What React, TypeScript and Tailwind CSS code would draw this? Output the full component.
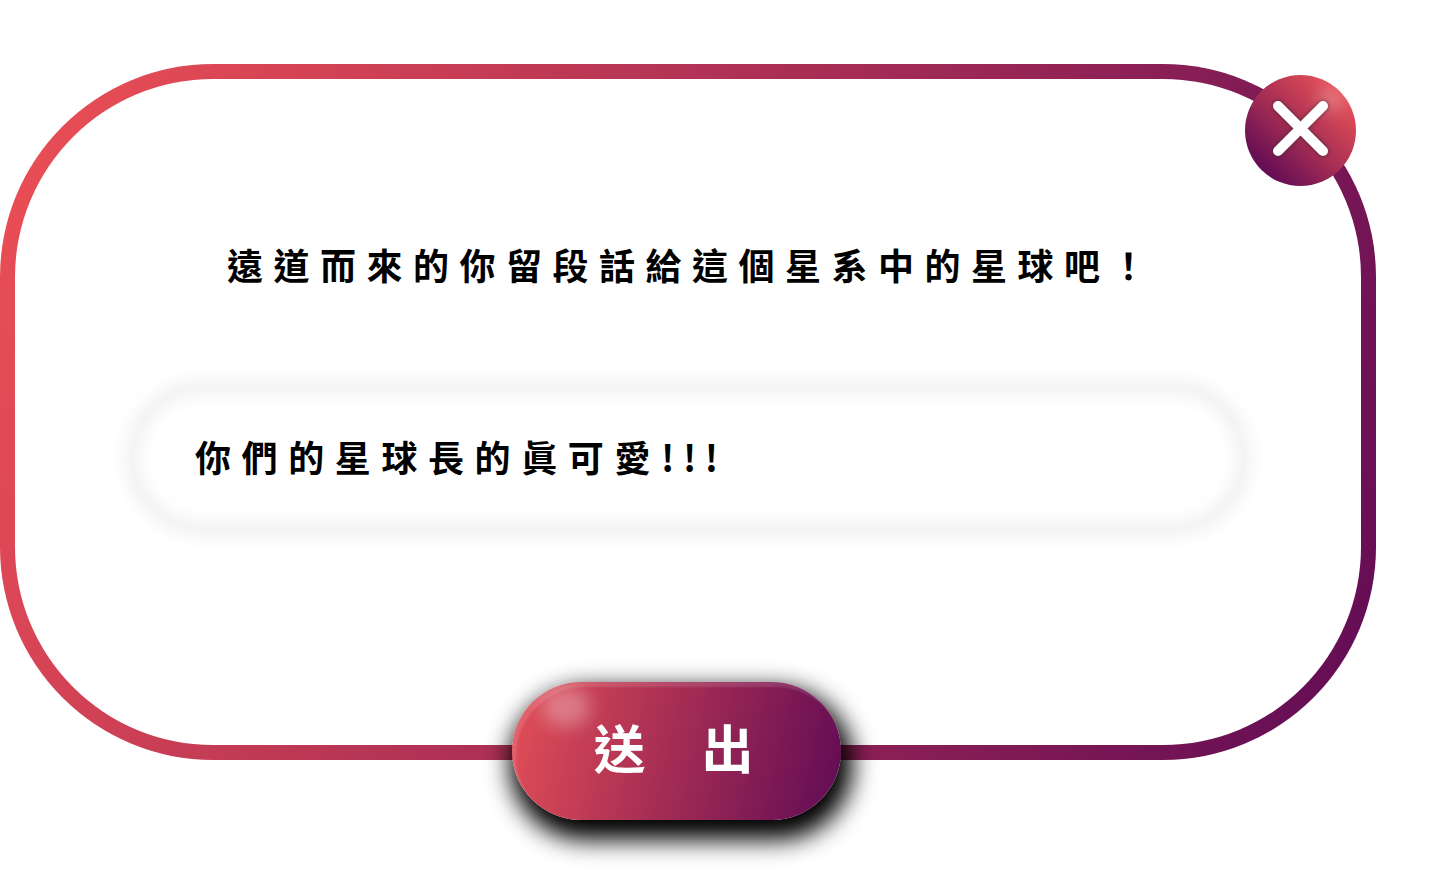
import React from 'react';

const cjk = "font-['Noto_Sans_CJK_TC','Noto_Sans_CJK_SC',sans-serif]";

const Gloss: React.FC<{ className: string }> = ({ className }) => (
  <span className={`pointer-events-none absolute rounded-full bg-white/30 blur-[9px] ${className}`} />
);

export default function App() {
  return (
    <div className={`h-[874px] w-[1431px] overflow-hidden bg-white pt-16 ${cjk}`}>
      <div className="relative flex h-[696px] w-[1376px] flex-col items-center rounded-[213px] border-[15px] border-transparent [background:linear-gradient(#fff,#fff)_padding-box,linear-gradient(112deg,#ee5055_0%,#600b55_100%)_border-box]">
        <h1 className="mt-[159px] ml-[8px] h-[52px] text-[36px] leading-[52px] font-bold tracking-[10.5px] whitespace-nowrap text-black">
          遠道而來的你留段話給這個星系中的星球吧！
        </h1>

        {/* Message field */}
        <div className="mt-[97px] flex h-[142px] w-[1112px] items-center rounded-full bg-white pb-[4px] pl-[63px] shadow-[0_0_18px_7px_rgba(0,0,0,0.06),inset_0_0_18px_7px_rgba(0,0,0,0.06)]">
          <span className="text-[36px] leading-[52px] font-bold tracking-[10.6px] whitespace-nowrap text-black">
            你們的星球長的眞可愛<span className="tracking-[8.6px]">!!!</span>
          </span>
        </div>

        {/* Close */}
        <button className="absolute top-[-4px] right-[5px] h-[111px] w-[111px] overflow-hidden rounded-full bg-[linear-gradient(45deg,#600b55_14%,#a92f54_50%,#e44f57_86%)]">
          <Gloss className="top-[12px] left-[74px] h-[24px] w-[24px]" />
          <svg viewBox="0 0 111 111" className="absolute inset-0 h-[111px] w-[111px] drop-shadow-[0_0_2px_rgba(40,40,40,0.7)]">
            <path d="M33 31 L 78 76 M78 31 L 33 76" fill="none" stroke="#fff" strokeWidth="10" strokeLinecap="round" />
          </svg>
        </button>

        {/* Submit */}
        <button className="relative mt-auto mr-[24px] -mb-[75px] flex h-[138px] w-[329px] items-center justify-center rounded-full bg-[linear-gradient(103deg,#e44f57_0%,#a92f54_45%,#600b55_100%)] pb-2 shadow-[5px_13px_24px_7px_#000,inset_4px_5px_2px_rgba(255,255,255,0.13)]">
          <Gloss className="top-[6px] left-[30px] h-[38px] w-[48px]" />
          <span className="mr-[3px] text-[52px] leading-none font-bold tracking-[2px] whitespace-nowrap text-white">送　出</span>
        </button>
      </div>
    </div>
  );
}
